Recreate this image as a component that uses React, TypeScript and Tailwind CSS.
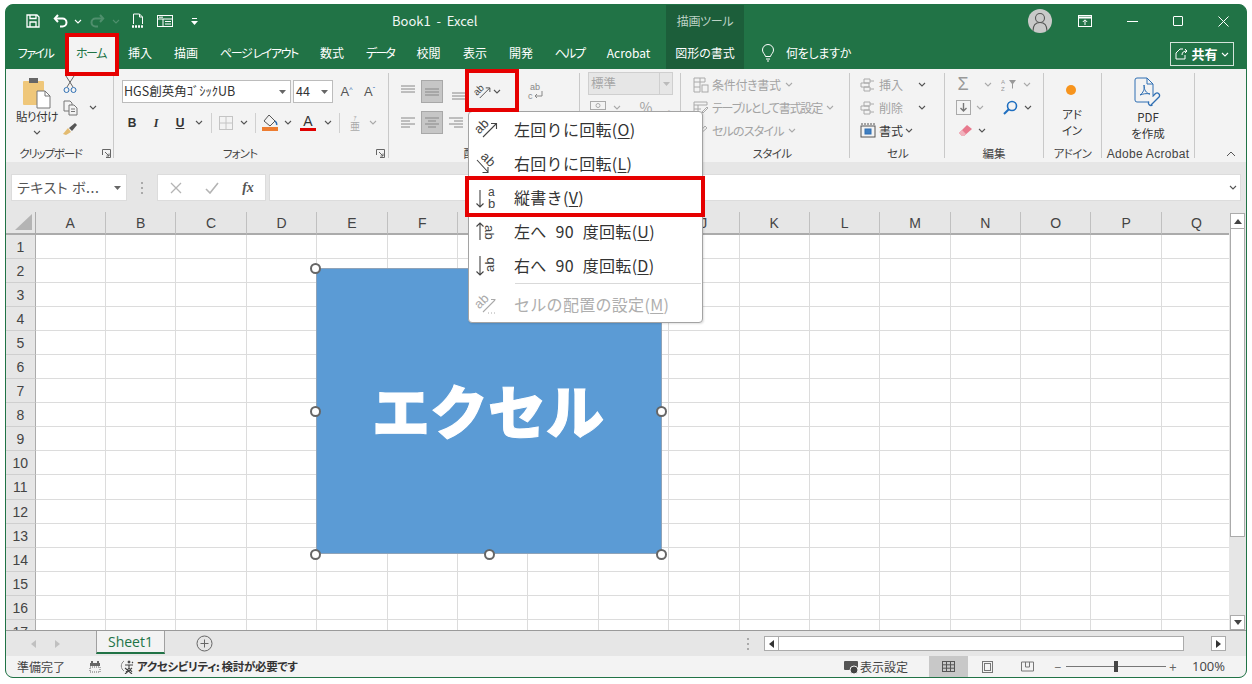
import React from "react";

const Chev = ({ c = "#555" }: { c?: string }) => (
  <svg width="8" height="5" viewBox="0 0 8 5" fill="none"><path d="M1 1l3 3 3-3" stroke={c} strokeWidth="1.1" /></svg>
);
const Tri = ({ c = "#666" }: { c?: string }) => (
  <svg width="7" height="4" viewBox="0 0 7 4"><path d="M0 0h7L3.500 4z" fill={c} /></svg>
);
const Launcher = () => (
  <svg width="9" height="9" viewBox="0 0 9 9" fill="none" stroke="#666"><path d="M.5 6V.5H8.500V8.500H4" /><path d="M3 3l4 4M7 4.500V7H4.500" /></svg>
);

const tf = "'Liberation Sans', sans-serif";
const AbLeft = ({ c = "#444" }: { c?: string }) => (
  <svg width="24" height="24" viewBox="0 0 24 24" fill="none" className="overflow-visible">
    <text x="0" y="13" fontSize="13" fill={c} fontFamily={tf} transform="rotate(-45 8 9)">ab</text>
    <path d="M9 20L22 7M17 6.500H22.500V12" stroke={c} strokeWidth="1.100" />
  </svg>
);
const AbRight = () => (
  <svg width="24" height="24" viewBox="0 0 24 24" fill="none" className="overflow-visible">
    <text x="6" y="12" fontSize="13" fill="#444" fontFamily={tf} transform="rotate(45 13 9)">ab</text>
    <path d="M3 9L14 21M14 16V21.500H8.500" stroke="#444" strokeWidth="1.100" />
  </svg>
);
const AbVert = () => (
  <svg width="24" height="24" viewBox="0 0 24 24" fill="none" className="overflow-visible">
    <path d="M6 5V22M2.500 18.500L6 22l3.500-3.500" stroke="#444" strokeWidth="1.100" />
    <text x="14" y="11" fontSize="12" fill="#444" fontFamily={tf}>a</text>
    <text x="14" y="23" fontSize="13" fill="#444" fontFamily={tf}>b</text>
  </svg>
);
const AbUp = () => (
  <svg width="24" height="24" viewBox="0 0 24 24" fill="none" className="overflow-visible">
    <path d="M6 21V4M2.500 7.500L6 4l3.500 3.500" stroke="#444" strokeWidth="1.100" />
    <text x="6" y="-11" fontSize="13" fill="#444" fontFamily={tf} transform="rotate(90)">ab</text>
  </svg>
);
const AbDown = () => (
  <svg width="24" height="24" viewBox="0 0 24 24" fill="none" className="overflow-visible">
    <path d="M6 3V22M2.500 18.500L6 22l3.500-3.500" stroke="#444" strokeWidth="1.100" />
    <text x="-19" y="20" fontSize="13" fill="#444" fontFamily={tf} transform="rotate(-90)">ab</text>
  </svg>
);
const AbFmt = () => (
  <svg width="24" height="24" viewBox="0 0 24 24" fill="none" className="overflow-visible">
    <text x="0" y="13" fontSize="13" fill="#aaa" fontFamily={tf} transform="rotate(-45 8 9)">ab</text>
    <path d="M9 20L21 8M17 7.500H21.500" stroke="#aaa" strokeWidth="1.100" />
    <path d="M14 21h9" stroke="#aaa" strokeDasharray="1 2" />
  </svg>
);

const AlignLines = ({ a }: { a: "t" | "m" | "b" | "l" | "c" | "r" }) => {
  const d: Record<string, string> = {
    t: "M3 3h14M3 6h14M3 9h14",
    m: "M3 6h14M3 9h14M3 12h14",
    b: "M3 10h14M3 13h14M3 16h14",
    l: "M3 4h14M3 7h9M3 10h14M3 13h9",
    c: "M3 4h14M6 7h8M3 10h14M6 13h8",
    r: "M3 4h14M8 7h9M3 10h14M8 13h9",
  };
  return (
    <svg width="20" height="18" viewBox="0 0 20 18" fill="none"><path d={d[a]} stroke="#888" /></svg>
  );
};

const Disabled = "text-[#a3a3a3]";
const Sep = () => <div className="w-px h-[85px] mt-[4px] bg-[#c9c9c9] shrink-0" />;
const MiniSep = () => <div className="w-px h-[20px] bg-[#d0d0d0]" />;
const GroupLabel = ({ children, className = "" }: { children: React.ReactNode; className?: string }) => (
  <span className={"text-[11.5px] leading-none text-[#444] whitespace-nowrap " + className}>{children}</span>
);

const Rib = ({ children, className = "" }: { children: React.ReactNode; className?: string }) => (
  <div className={"flex items-center justify-center shrink-0 " + className}>{children}</div>
);

function TitleBar() {
  return (
    <div className="h-[32px] flex items-stretch text-white shrink-0">
      <Rib className="ml-[15px] w-[24px]">
        <svg width="14" height="14" viewBox="0 0 14 14" fill="none" stroke="#fff" strokeWidth="1.300"><path d="M1 1h10l2 2v10H1z" /><path d="M4 1v3.500h6V1M4 13V8h6v5" /></svg>
      </Rib>
      <Rib className="ml-[2px] w-[27px]">
        <svg width="16" height="14" viewBox="0 0 16 14" fill="none" stroke="#fff" strokeWidth="2"><path d="M5 1L1.800 4.500 5 8" /><path d="M2 4.500h7.500a4 4 0 0 1 0 8H7" /></svg>
      </Rib>
      <Rib className="w-[8px]"><Chev c="#fff" /></Rib>
      <Rib className="ml-[4px] w-[22px]">
        <svg width="16" height="14" viewBox="0 0 16 14" fill="none" stroke="#4f8f6d" strokeWidth="2"><path d="M11 1l3.200 3.500L11 8" /><path d="M14 4.500H6.500a4 4 0 0 0 0 8H9" /></svg>
      </Rib>
      <Rib className="ml-[4px] w-[8px]"><Chev c="#4f8f6d" /></Rib>
      <Rib className="ml-[7px] w-[22px]">
        <svg width="14" height="16" viewBox="0 0 14 16" fill="none" stroke="#fff"><path d="M2.500 11V1h6l3 3v7M8.500 1v3h3" /><path d="M1 13.500h12" strokeWidth="2.500" strokeDasharray="2 1" /></svg>
      </Rib>
      <Rib className="ml-[5px] w-[22px]">
        <svg width="16" height="14" viewBox="0 0 16 14" fill="none" stroke="#fff"><rect x=".5" y="1.500" width="15" height="11" /><path d="M1 5h14M6 5v7M8 7.500h6M8 10h6" /><path d="M2 3.200h4" /></svg>
      </Rib>
      <Rib className="ml-[12px] w-[12px]">
        <svg width="7" height="7" viewBox="0 0 7 7" fill="#fff"><path d="M1 0h5v1H1zM0 3h7L3.500 7z" /></svg>
      </Rib>
      <div className="ml-[192px] w-[88px] shrink-0 flex items-center text-[13px] whitespace-pre text-[#f2f7f4]">Book1  -  Excel</div>
      <div className="ml-[186px] w-[78px] shrink-0 bg-[#1c5e3a] flex items-center justify-center text-[12px] text-[#bcd2c5] tracking-[-0.3px]">描画ツール</div>
      <div className="ml-[284px] w-[24px] shrink-0 flex items-center justify-center">
        <div className="w-[24px] h-[24px] rounded-full bg-[#c9c9c9] flex items-center justify-center overflow-hidden">
          <svg width="24" height="24" viewBox="0 0 24 24" fill="none" stroke="#555" strokeWidth="1.100"><circle cx="12" cy="9" r="4.500" /><path d="M5 22c0-6 3-8.500 7-8.500s7 2.500 7 8.500" /></svg>
        </div>
      </div>
      <Rib className="ml-[21px] w-[24px]">
        <svg width="14" height="12" viewBox="0 0 14 12" fill="none" stroke="#fff"><rect x=".5" y=".5" width="13" height="11" /><path d="M1 2.500h12" strokeWidth="2" /><path d="M7 10V5M4.800 7L7 4.800 9.200 7" /></svg>
      </Rib>
      <Rib className="ml-[12px] w-[46px]"><div className="w-[11px] h-px bg-white" /></Rib>
      <Rib className="w-[45px]"><div className="w-[10px] h-[10px] border border-white rounded-[1px]" /></Rib>
      <Rib className="w-[46px]">
        <svg width="11" height="11" viewBox="0 0 11 11" stroke="#fff"><path d="M.5.500l10 10M10.500.500l-10 10" /></svg>
      </Rib>
    </div>
  );
}

const tabs: [string, string][] = [
  ["ファイル", "w-[59px] tracking-[-1.5px]"],
  ["ホーム", "w-[52px] tracking-[-1.5px]"],
  ["挿入", "w-[46px]"],
  ["描画", "w-[46px]"],
  ["ページ レイアウト", "w-[100px] tracking-[-1.4px]"],
  ["数式", "w-[46px]"],
  ["データ", "w-[50px] tracking-[-1.8px]"],
  ["校閲", "w-[47px]"],
  ["表示", "w-[46px]"],
  ["開発", "w-[46px]"],
  ["ヘルプ", "w-[51px] tracking-[-1.5px]"],
  ["Acrobat", "w-[67px]"],
];

function TabRow() {
  return (
    <div className="h-[32px] flex items-stretch text-white text-[12px] shrink-0">
      {tabs.map(([t, w]) => (
        <div
          key={t}
          className={
            "flex items-center justify-center whitespace-nowrap shrink-0 " + w + (t === "ホーム" ? " bg-[#f3f3f3] text-[#217346]" : "")
          }
        >
          {t}
        </div>
      ))}
      <div className="ml-[4px] w-[78px] shrink-0 bg-[#1c5e3a] flex items-center justify-center">図形の書式</div>
      <Rib className="ml-[14px] w-[20px]">
        <svg width="14" height="18" viewBox="0 0 14 18" fill="none" stroke="#fff"><path d="M4.500 12.500C4 10 1.500 9 1.500 6a5.500 5.500 0 0 1 11 0c0 3-2.500 4-3 6.500z" /><path d="M5 15h4M6 17h2" /></svg>
      </Rib>
      <div className="ml-[8px] flex items-center tracking-[-0.3px]">何をしますか</div>
      <div className="flex-1" />
      <div className="mr-[12px] mt-[5px] mb-[3px] w-[64px] border border-[#d5e3da] flex items-center justify-center gap-[3px]">
        <svg width="13" height="12" viewBox="0 0 13 12" fill="none" stroke="#fff"><path d="M1 5v6h9V7" /><path d="M1 5l4-4h3M7 7c0-3 2-4 5-4M10 1l2 2-2 2" /></svg>
        <span className="font-bold text-[13px]">共有</span>
        <Chev c="#fff" />
      </div>
    </div>
  );
}

function ClipGroup() {
  return (
    <div className="w-[107px] h-[93px] flex flex-col shrink-0">
      <div className="h-[76px] flex">
        <div className="ml-[10px] w-[42px] flex flex-col items-center pt-[8px]">
          <svg width="30" height="32" viewBox="0 0 30 32" fill="none">
            <rect x="1" y="4" width="21" height="24" rx="1" fill="#efc77a" />
            <rect x="7" y="1" width="9" height="5" fill="#666" />
            <path d="M15 14h8l5 5v12H15z" fill="#fff" stroke="#777" />
            <path d="M23 14v5h5" stroke="#777" />
          </svg>
          <span className="text-[11.5px] leading-none mt-[2px] text-[#333] whitespace-nowrap tracking-[-0.4px]">貼り付け</span>
          <div className="mt-[7px]"><Chev /></div>
        </div>
        <div className="w-[24px] pt-[4px] flex flex-col items-center">
          <Rib className="h-[23px]">
            <svg width="14" height="18" viewBox="0 0 14 18" fill="none"><path d="M3 0l7 11M11 0L4 11" stroke="#666" /><circle cx="3.500" cy="14" r="2.500" stroke="#2f6fb3" /><circle cx="10.500" cy="14" r="2.500" stroke="#2f6fb3" /></svg>
          </Rib>
          <Rib className="h-[23px]">
            <svg width="15" height="16" viewBox="0 0 15 16" fill="none" stroke="#777"><path d="M1 1h6l2 2v8H1z" /><path d="M6 5h5l3 3v7H6z" fill="#f3f3f3" /><path d="M8 9h4M8 11.500h4" /></svg>
          </Rib>
          <Rib className="h-[19px]">
            <svg width="16" height="14" viewBox="0 0 16 14"><path d="M1 12l3 1 5-3-3-4z" fill="#e3bb70" /><path d="M7 6l3 3 5-6-2-2z" fill="#555" /></svg>
          </Rib>
        </div>
        <div className="w-[22px] pt-[27px]"><Rib className="h-[23px]"><Chev /></Rib></div>
      </div>
      <div className="h-[17px] flex items-center">
        <div className="ml-[15px] w-[59px] flex justify-center"><GroupLabel className="tracking-[-1.2px]">クリップボード</GroupLabel></div>
        <div className="ml-[22px]"><Launcher /></div>
      </div>
    </div>
  );
}

function FontGroup() {
  return (
    <div className="w-[274px] h-[93px] flex flex-col shrink-0">
      <div className="h-[76px] flex flex-col">
        <div className="mt-[11px] ml-[8px] h-[23px] flex">
          <div className="w-[169px] bg-white border border-[#bcbcbc] flex items-center justify-between pl-[1px] pr-[4px] text-[12.5px] text-[#333] whitespace-nowrap">
            HGS創英角ｺﾞｼｯｸUB <Tri />
          </div>
          <div className="ml-[2px] w-[40px] bg-white border border-[#bcbcbc] flex items-center justify-between pl-[2px] pr-[4px] text-[12.5px] text-[#333]">
            44 <Tri />
          </div>
          <Rib className="ml-[2px] w-[23px]"><span className="text-[13px] text-[#555] font-['Liberation_Sans']">A<sup className="text-[7px] text-[#2b6cb0]">^</sup></span></Rib>
          <Rib className="w-[23px]"><span className="text-[13px] text-[#555] font-['Liberation_Sans']">A<sup className="text-[7px] text-[#2b6cb0]">ˇ</sup></span></Rib>
        </div>
        <div className="mt-[8px] ml-[6px] h-[23px] flex items-center text-[#333]">
          <Rib className="w-[24px] font-bold text-[12px] font-['Liberation_Sans']">B</Rib>
          <Rib className="w-[24px] italic font-bold text-[12px] font-['Liberation_Serif']">I</Rib>
          <Rib className="w-[24px] font-bold underline text-[12px] font-['Liberation_Sans']">U</Rib>
          <Rib className="w-[14px]"><Chev /></Rib>
          <Rib className="w-[10px]"><MiniSep /></Rib>
          <Rib className="w-[20px]">
            <svg width="14" height="14" viewBox="0 0 14 14" fill="none" stroke="#c4c4c4"><rect x=".5" y=".5" width="13" height="13" /><path d="M7 0v14M0 7h14" /></svg>
          </Rib>
          <Rib className="w-[16px]"><Chev /></Rib>
          <Rib className="w-[6px]"><MiniSep /></Rib>
          <Rib className="w-[24px]">
            <svg width="16" height="17" viewBox="0 0 16 17" fill="none"><path d="M7 1l6 6-5 5-6-5z" stroke="#555" /><path d="M13 7c1 1 2 3 1.500 4" stroke="#2f6fb3" strokeWidth="1.500" /><rect y="13" width="16" height="4" fill="#ed7d31" /></svg>
          </Rib>
          <Rib className="w-[12px]"><Chev /></Rib>
          <Rib className="w-[28px]">
            <div className="flex flex-col items-center w-[16px]">
              <span className="text-[14px] leading-[14px] font-['Liberation_Sans'] text-[#333]">A</span>
              <div className="w-[16px] h-[3px] bg-[#e00000]" />
            </div>
          </Rib>
          <Rib className="w-[12px]"><Chev /></Rib>
          <Rib className="w-[10px]"><MiniSep /></Rib>
          <Rib className="w-[22px]">
            <div className="flex flex-col items-center text-[#aaa] leading-none">
              <span className="text-[6px] leading-[7px]">ｱ</span>
              <span className="text-[10px] leading-[10px]">亜</span>
            </div>
          </Rib>
          <Rib className="w-[14px]"><Chev c="#aaa" /></Rib>
        </div>
      </div>
      <div className="h-[17px] flex items-center">
        <div className="ml-[108px] w-[36px] flex justify-center"><GroupLabel className="tracking-[-0.8px]">フォント</GroupLabel></div>
        <div className="ml-[118px]"><Launcher /></div>
      </div>
    </div>
  );
}

function AlignGroup() {
  return (
    <div className="w-[190px] h-[93px] flex flex-col shrink-0">
      <div className="h-[76px] flex flex-col">
        <div className="mt-[11px] ml-[8px] h-[23px] flex items-center">
          <Rib className="w-[22px]"><AlignLines a="t" /></Rib>
          <Rib className="ml-[2px] w-[22px] h-[23px] bg-[#c6c6c6] border border-[#a8a8a8]"><AlignLines a="m" /></Rib>
          <Rib className="ml-[2px] w-[28px]"><AlignLines a="b" /></Rib>
          <Rib className="w-[17px]">
            <svg width="18" height="18" viewBox="0 0 24 24" fill="none" className="shrink-0 overflow-visible">
              <text x="0" y="13" fontSize="13" fill="#444" fontFamily={tf} transform="rotate(-45 8 9)">ab</text>
              <path d="M9 20L22 7M17 6.500H22.500V12" stroke="#444" strokeWidth="1.200" />
            </svg>
          </Rib>
          <Rib className="w-[14px]"><Chev /></Rib>
          <Rib className="ml-[21px] w-[22px]">
            <svg width="18" height="20" viewBox="0 0 18 20"><text x="3" y="8" fontSize="9" fill="#888" fontFamily={tf}>ab</text><text x="1" y="17" fontSize="9" fill="#888" fontFamily={tf}>c</text><path d="M15 9v5H8M10 12l-2 2 2 2" stroke="#888" fill="none" /></svg>
          </Rib>
        </div>
        <div className="mt-[8px] ml-[8px] h-[23px] flex items-center">
          <Rib className="w-[22px]"><AlignLines a="l" /></Rib>
          <Rib className="ml-[2px] w-[22px] h-[23px] bg-[#c6c6c6] border border-[#a8a8a8]"><AlignLines a="c" /></Rib>
          <Rib className="ml-[2px] w-[22px]"><AlignLines a="r" /></Rib>
        </div>
      </div>
      <div className="h-[17px] flex items-center justify-center pr-[18px]"><GroupLabel>配置</GroupLabel></div>
    </div>
  );
}

function NumberGroup() {
  return (
    <div className="w-[100px] h-[93px] flex flex-col shrink-0">
      <div className="h-[76px] flex flex-col pl-[8px] pt-[3px]">
        <div className="w-[85px] h-[23px] bg-[#e6e6e6] border border-[#cfcfcf] flex items-center text-[12.5px] text-[#a6a6a6]">
          <span className="pl-[2px] flex-1">標準</span>
          <div className="w-[13px] h-full border-l border-[#cfcfcf] flex items-center justify-center"><Tri c="#bbb" /></div>
        </div>
        <div className="h-[22px] mt-[1px] flex items-center">
          <Rib className="w-[20px]">
            <svg width="16" height="13" viewBox="0 0 16 13" fill="none" stroke="#aaa"><rect x=".5" y=".5" width="15" height="8" /><circle cx="8" cy="4.500" r="2" /><path d="M3 11h10" /></svg>
          </Rib>
          <Rib className="w-[18px]"><Chev c="#aaa" /></Rib>
          <Rib className={"ml-[10px] w-[20px] text-[14px] " + Disabled}>%</Rib>
          <Rib className={"ml-[3px] w-[20px] text-[14px] font-bold " + Disabled}>,</Rib>
        </div>
      </div>
      <div className="h-[17px]" />
    </div>
  );
}

const StyleRow = ({ t, icon, tr = "" }: { t: string; icon: React.ReactNode; tr?: string }) => (
  <div className={"h-[23px] flex items-center text-[12px] whitespace-nowrap " + Disabled}>
    <div className="w-[20px] flex justify-center shrink-0">{icon}</div>
    <span className={"ml-[1px] " + tr}>{t}</span>
    <div className="ml-[4px]"><Chev c="#aaa" /></div>
  </div>
);

function StyleGroup() {
  return (
    <div className="w-[168px] h-[93px] flex flex-col shrink-0">
      <div className="h-[76px] pt-[4px] pl-[10px]">
        <StyleRow t="条件付き書式" tr="tracking-[-0.3px]" icon={<svg width="16" height="16" viewBox="0 0 16 16" fill="none" stroke="#aaa"><path d="M1 1h6v14H1zM1 5h6M1 10h6M7 5h5M12 1H7M12 1v4" /><rect x="9" y="8" width="6" height="7" /></svg>} />
        <StyleRow t="テーブルとして書式設定" tr="tracking-[-1.2px]" icon={<svg width="16" height="14" viewBox="0 0 16 14" fill="none" stroke="#aaa"><path d="M1 1h13v3H1zM1 4v9h7M5 4v9M1 8h7" /><path d="M9 11l5-5 1 1-5 5z" /></svg>} />
        <StyleRow t="セルのスタイル" tr="tracking-[-0.8px]" icon={<svg width="14" height="14" viewBox="0 0 14 14" fill="none" stroke="#aaa"><path d="M2 12l3-3 6-7 2 2-7 6z" /></svg>} />
      </div>
      <div className="h-[17px] flex items-center justify-center pl-[14px]"><GroupLabel className="tracking-[-0.6px]">スタイル</GroupLabel></div>
    </div>
  );
}

const CellRow = ({ t, icon, off, gap }: { t: string; icon: React.ReactNode; off?: boolean; gap: string }) => (
  <div className={"h-[23px] flex items-center text-[12px] whitespace-nowrap " + (off ? Disabled : "text-[#333]")}>
    <div className="w-[20px] flex justify-center shrink-0">{icon}</div>
    <span className="ml-[1px]">{t}</span>
    <div className={gap}><Chev c="#555" /></div>
  </div>
);

function CellsGroup() {
  const g = (
    <svg width="16" height="14" viewBox="0 0 16 14" fill="none" stroke="#aaa"><path d="M4 1h6v4H4zM1 5h8v4H1zM4 9h6v4H4zM10 3h4M10 11h4" /></svg>
  );
  return (
    <div className="w-[94px] h-[93px] flex flex-col shrink-0">
      <div className="h-[76px] pt-[4px] pl-[8px]">
        <CellRow t="挿入" off icon={g} gap="ml-[15px]" />
        <CellRow t="削除" off icon={g} gap="ml-[15px]" />
        <CellRow t="書式" gap="ml-[2px]" icon={<svg width="16" height="15" viewBox="0 0 16 15" fill="none" stroke="#555"><rect x="1" y="3" width="14" height="11" /><path d="M1 1h14" strokeDasharray="2 1" /><rect x="5" y="6" width="6" height="5" fill="#3f7fc1" stroke="#2f6fb3" /></svg>} />
      </div>
      <div className="h-[17px] flex items-center justify-center pl-[2px]"><GroupLabel>セル</GroupLabel></div>
    </div>
  );
}

function EditGroup() {
  return (
    <div className="w-[98px] h-[93px] flex flex-col shrink-0">
      <div className="h-[76px] pt-[4px] pl-[8px]">
        <div className="h-[23px] flex items-center">
          <Rib className="w-[20px] text-[18px] text-[#999] font-['Liberation_Sans']">Σ</Rib>
          <Rib className="ml-[6px] w-[18px]"><Chev c="#aaa" /></Rib>
          <Rib className="ml-[2px] w-[20px]">
            <svg width="16" height="14" viewBox="0 0 16 14"><text x="0" y="6" fontSize="6" fill="#999" fontFamily={tf}>A</text><text x="0" y="13" fontSize="6" fill="#999" fontFamily={tf}>Z</text><path d="M8 2h7l-3 4v5l-1-1V6z" fill="#999" /></svg>
          </Rib>
          <Rib className="w-[16px]"><Chev c="#aaa" /></Rib>
        </div>
        <div className="h-[23px] flex items-center">
          <Rib className="w-[20px]">
            <svg width="15" height="15" viewBox="0 0 15 15" fill="none"><rect x=".5" y=".5" width="14" height="14" stroke="#aaa" /><path d="M7.500 3v8M4.500 8l3 3 3-3" stroke="#777" strokeWidth="1.400" /></svg>
          </Rib>
          <Rib className="w-[14px]"><Chev c="#aaa" /></Rib>
          <Rib className="ml-[12px] w-[22px]">
            <svg width="15" height="15" viewBox="0 0 15 15" fill="none" stroke="#1f6fc0" strokeWidth="1.600"><circle cx="9" cy="6" r="4.500" /><path d="M5.800 9.200L1 14" strokeWidth="2" /></svg>
          </Rib>
          <Rib className="w-[14px]"><Chev /></Rib>
        </div>
        <div className="h-[23px] flex items-center">
          <Rib className="w-[24px]">
            <svg width="15" height="13" viewBox="0 0 15 13"><path d="M1 9l8-8 5 4-8 7H4z" fill="#e8798d" /><path d="M1 9l3 3h2l2-2-4-4z" fill="#f1b1bc" /></svg>
          </Rib>
          <Rib className="w-[10px]"><Chev /></Rib>
        </div>
      </div>
      <div className="h-[17px] flex items-center justify-center"><GroupLabel>編集</GroupLabel></div>
    </div>
  );
}

function AddinGroup() {
  return (
    <div className="w-[57px] h-[93px] flex flex-col shrink-0">
      <div className="h-[76px] flex flex-col items-center text-[11.500px] leading-[16px] text-[#333]">
        <div className="mt-[16px] -ml-[3px] w-[10px] h-[10px] rounded-full bg-[#f7941d]" />
        <span className="mt-[11px] -ml-[1px]">アド</span>
        <span className="-ml-[1px]">イン</span>
      </div>
      <div className="h-[17px] flex items-center justify-center"><GroupLabel className="tracking-[-0.6px]">アドイン</GroupLabel></div>
    </div>
  );
}

function AcrobatGroup() {
  return (
    <div className="w-[92px] h-[93px] flex flex-col shrink-0">
      <div className="h-[76px] flex flex-col items-center text-[11.500px] leading-[16px] text-[#333]">
        <svg className="mt-[8px]" width="28" height="30" viewBox="0 0 28 30" fill="none" stroke="#2f6fb3">
          <path d="M19 18V7l-6-6H3a2 2 0 0 0-2 2v20a2 2 0 0 0 2 2h11" />
          <path d="M13 1v6h6" />
          <path d="M6 18c3-2 5-6 4-10 0 5 2 8 6 9-4-1-7 0-10 1z" />
          <path d="M17 28l8-8a2.500 2.500 0 0 0-3.500-3.500l-3 3M15 24.500a2.500 2.500 0 0 0 3.500 3.500" strokeWidth="1.300" />
        </svg>
        <span className="mt-[2px]">PDF</span>
        <span>を作成</span>
      </div>
      <div className="h-[17px] flex items-center justify-center"><span className="text-[12px] leading-none tracking-[0.3px] text-[#444] whitespace-nowrap font-['Liberation_Sans']">Adobe Acrobat</span></div>
    </div>
  );
}

function Ribbon() {
  return (
    <div className="h-[93px] bg-[#f3f3f3] flex shrink-0">
      <ClipGroup /><Sep />
      <FontGroup /><Sep />
      <AlignGroup /><Sep />
      <NumberGroup /><Sep />
      <StyleGroup /><Sep />
      <CellsGroup /><Sep />
      <EditGroup /><Sep />
      <AddinGroup /><Sep />
      <AcrobatGroup /><Sep />
      <div className="flex-1 flex items-end justify-end pr-[10px] pb-[5px]">
        <svg width="10" height="6" viewBox="0 0 10 6" fill="none" stroke="#555"><path d="M1 5l4-4 4 4" /></svg>
      </div>
    </div>
  );
}

function FormulaBar() {
  return (
    <div className="h-[50px] bg-[#e6e6e6] flex pt-[12px] pl-[5px] pr-[5px] shrink-0">
      <div className="w-[116px] h-[27px] bg-white border border-[#dcdcdc] flex items-center justify-between pl-[5px] pr-[5px] text-[14px] text-[#555] whitespace-nowrap">
        <span className="tracking-[0.6px]">テキスト ボ...</span>
        <Tri />
      </div>
      <div className="w-[30px] h-[27px] flex items-center justify-center">
        <svg width="3" height="12" viewBox="0 0 3 12" fill="#aaa"><rect width="2" height="2" /><rect y="5" width="2" height="2" /><rect y="10" width="2" height="2" /></svg>
      </div>
      <div className="w-[109px] h-[27px] bg-white border border-[#dcdcdc] flex items-center">
        <Rib className="w-[36px]"><svg width="12" height="12" viewBox="0 0 12 12" stroke="#b4b4b4" strokeWidth="1.300"><path d="M1 1l10 10M11 1L1 11" /></svg></Rib>
        <Rib className="w-[36px]"><svg width="14" height="12" viewBox="0 0 14 12" fill="none" stroke="#b4b4b4" strokeWidth="1.600"><path d="M1 7l4 4 8-10" /></svg></Rib>
        <Rib className="w-[36px] italic font-bold text-[14px] text-[#555] font-['Liberation_Serif']">fx</Rib>
      </div>
      <div className="ml-[3px] flex-1 h-[27px] bg-white border border-[#dcdcdc] flex items-center justify-end pr-[3px]">
        <Chev />
      </div>
    </div>
  );
}

const cols = "ABCDEFGHIJKLMNOPQ".split("");
const rows = Array.from({ length: 17 }, (_, i) => i + 1);

function Sheet() {
  return (
    <div className="h-[418px] flex shrink-0 bg-[#e6e6e6]">
      <div className="w-[1223px] overflow-hidden">
        <div className="grid grid-cols-[29.6px_repeat(17,70.4px)] w-[1227px] grid-rows-[23px_repeat(17,24.05px)]">
          <div className="bg-[#e6e6e6] border-b-2 border-r border-[#ababab] flex items-end justify-end pr-[3px] pb-[3px]">
            <svg width="17" height="16" viewBox="0 0 17 16"><path d="M17 0v16H0z" fill="#b4b4b4" /></svg>
          </div>
          {cols.map((c) => (
            <div key={c} className="bg-[#e6e6e6] border-b-2 border-[#ababab] border-r border-r-[#c0c0c0] flex items-center justify-center pt-[1px] text-[14px] text-[#444] font-['Liberation_Sans']">
              {c}
            </div>
          ))}
          {rows.map((r) => (
            <React.Fragment key={r}>
              <div className="bg-[#e6e6e6] border-r border-r-[#ababab] border-b border-b-[#cfcfcf] flex items-center justify-center pt-[2px] text-[14px] text-[#444] font-['Liberation_Sans']">
                {r}
              </div>
              {cols.map((c) => (
                <div key={c} className="bg-white border-r border-b border-[#dcdcdc]" />
              ))}
            </React.Fragment>
          ))}
        </div>
      </div>
      <div className="flex-1 flex flex-col pt-[1px] pl-px">
        <div className="w-[15px] h-[16px] bg-white border border-[#ababab] flex items-center justify-center"><svg width="8" height="5" viewBox="0 0 8 5"><path d="M4 0l4 5H0z" fill="#444" /></svg></div>
        <div className="w-[15px] h-[308px] bg-white border border-t-0 border-[#ababab]" />
        <div className="flex-1" />
        <div className="w-[15px] h-[15px] bg-white border border-[#ababab] flex items-center justify-center"><svg width="8" height="5" viewBox="0 0 8 5"><path d="M4 5l4-5H0z" fill="#444" /></svg></div>
      </div>
    </div>
  );
}

function SheetTabs() {
  return (
    <div className="h-[26px] bg-[#e6e6e6] border-t border-[#9a9a9a] flex shrink-0">
      <Rib className="ml-[22px] w-[10px]"><svg width="5" height="8" viewBox="0 0 5 8"><path d="M5 0v8L0 4z" fill="#c0c0c0" /></svg></Rib>
      <Rib className="ml-[14px] w-[10px]"><svg width="5" height="8" viewBox="0 0 5 8"><path d="M0 0v8l5-4z" fill="#c0c0c0" /></svg></Rib>
      <div className="ml-[34px] w-[69px] h-[23px] bg-[#f3f3f3] border-x border-[#a0a0a0] border-b-2 border-b-[#217346] flex items-center justify-center text-[14px] text-[#217346] font-['Open_Sans']">Sheet1</div>
      <Rib className="ml-[30px] w-[18px]">
        <svg width="17" height="17" viewBox="0 0 17 17" fill="none" stroke="#666"><circle cx="8.500" cy="8.500" r="7.500" /><path d="M8.500 4.500v8M4.500 8.500h8" /></svg>
      </Rib>
      <div className="flex-1" />
      <Rib className="w-[4px]"><svg width="3" height="12" viewBox="0 0 3 12" fill="#aaa"><rect width="2" height="2" /><rect y="5" width="2" height="2" /><rect y="10" width="2" height="2" /></svg></Rib>
      <div className="ml-[14px] mt-[5px] h-[15px] flex">
        <div className="w-[15px] bg-white border border-[#ababab] flex items-center justify-center"><svg width="5" height="8" viewBox="0 0 5 8"><path d="M5 0v8L0 4z" fill="#333" /></svg></div>
        <div className="w-[405px] bg-white border border-l-0 border-[#ababab]" />
        <div className="w-[27px]" />
        <div className="w-[15px] bg-white border border-[#ababab] flex items-center justify-center"><svg width="5" height="8" viewBox="0 0 5 8"><path d="M0 0v8l5-4z" fill="#333" /></svg></div>
      </div>
      <div className="w-[20px]" />
    </div>
  );
}

function StatusBar() {
  return (
    <div className="h-[21px] bg-[#f3f3f3] flex items-stretch text-[12px] text-[#444] shrink-0 whitespace-nowrap">
      <div className="ml-[11px] w-[48px] flex items-center">準備完了</div>
      <Rib className="ml-[23px] w-[14px]">
        <svg width="12" height="12" viewBox="0 0 12 12" fill="#666"><rect x="1" y="2" width="10" height="3" /><rect x="2" y="0" width="2" height="2" /><rect x="8" y="0" width="2" height="2" /><path d="M1 6h10v5H1z" fill="none" stroke="#666" strokeDasharray="1 1" /></svg>
      </Rib>
      <Rib className="ml-[17px] w-[18px]">
        <svg width="16" height="15" viewBox="0 0 16 15" fill="none" stroke="#444"><path d="M4 2a6 6 0 0 0 0 10" stroke="#888" /><circle cx="9" cy="3" r="1" fill="#444" /><path d="M5 6h8M9 6v3M6 13l3-4 3 4M13 3l-1 1M5 9l7 6M12 9l-7 6" strokeWidth="1.100" /></svg>
      </Rib>
      <div className="flex items-center font-bold text-[11.500px] tracking-[-0.35px] text-[#333]">アクセシビリティ: 検討が必要です</div>
      <div className="flex-1" />
      <Rib className="w-[16px]">
        <svg width="15" height="14" viewBox="0 0 15 14"><rect y="1" width="14" height="9" rx="1" fill="#555" /><circle cx="10" cy="10" r="4" fill="#444" stroke="#f3f3f3" /></svg>
      </Rib>
      <div className="w-[48px] flex items-center">表示設定</div>
      <div className="w-[21px]" />
      <Rib className="w-[39px] bg-[#c8c8c8]">
        <svg width="13" height="11" viewBox="0 0 13 11" fill="none" stroke="#555"><rect x=".5" y=".5" width="12" height="10" /><path d="M4.500 0v11M8.500 0v11M0 3.800h13M0 7.200h13" /></svg>
      </Rib>
      <Rib className="w-[40px]">
        <svg width="11" height="12" viewBox="0 0 11 12" fill="none" stroke="#777"><rect x=".5" y=".5" width="10" height="11" /><rect x="2.500" y="2.500" width="6" height="7" /></svg>
      </Rib>
      <Rib className="w-[39px]">
        <svg width="13" height="11" viewBox="0 0 13 11" fill="none" stroke="#777"><path d="M.5 1v9h12V1zM4.500 1v5h4V1" /></svg>
      </Rib>
      <Rib className="ml-[6px] w-[10px] text-[#666]">−</Rib>
      <div className="ml-[3px] w-[100px] flex items-center relative">
        <div className="w-full h-px bg-[#777]" />
        <div className="absolute left-[48px] w-[4px] h-[11px] bg-[#444]" />
      </div>
      <Rib className="ml-[2px] w-[10px] text-[#666] text-[13px]">+</Rib>
      <div className="ml-[14px] flex items-center text-[13px] text-[#444] font-['Open_Sans']">100%</div>
      <div className="w-[21px]" />
    </div>
  );
}

const Item = ({ icon, label, k, off, className = "" }: { icon: React.ReactNode; label: string; k: string; off?: boolean; className?: string }) => (
  <div className={"h-[34px] flex items-center whitespace-nowrap text-[16px] tracking-[0.3px] [word-spacing:5px] [font-feature-settings:normal] " + (off ? "text-[#aeaeae] " : "text-[#333] ") + className}>
    <div className="w-[45px] flex justify-start pl-[5px] shrink-0">{icon}</div>
    <span>
      {label}(<span className="underline underline-offset-2">{k}</span>)
    </span>
  </div>
);

function Menu() {
  return (
    <div className="absolute left-[468px] top-[111px] w-[235px] h-[212px] bg-white border border-[#a3a3a3] rounded-[4px] shadow-[1px_1px_2px_rgba(0,0,0,0.12)]">
      <Item icon={<AbLeft />} label="左回りに回転" k="O" />
      <Item icon={<AbRight />} label="右回りに回転" k="L" />
      <Item icon={<AbVert />} label="縦書き" k="V" />
      <Item icon={<AbUp />} label="左へ 90 度回転" k="U" />
      <Item icon={<AbDown />} label="右へ 90 度回転" k="D" />
      <div className="ml-[46px] mr-[1px] mt-[1px] h-px bg-[#d9d9d9]" />
      <Item icon={<AbFmt />} label="セルの配置の設定" k="M" off className="mt-[3px]" />
    </div>
  );
}

const Handle = ({ className }: { className: string }) => (
  <div className={"absolute w-[11px] h-[11px] rounded-full bg-white border-2 border-[#666] " + className} />
);

function Shape() {
  return (
    <div className="absolute left-[316px] top-[268px] w-[346px] h-[286px] bg-[#5b9bd5] border border-[#8fa3b8] flex items-center justify-center">
      <span className="text-[58px] font-black leading-none text-white whitespace-nowrap font-['Noto_Sans_CJK_JP'] [font-feature-settings:normal] [-webkit-text-stroke:1px_white] -mt-[5px] -ml-[2px]">エクセル</span>
      <Handle className="-left-[7px] -top-[6px]" />
      <Handle className="-right-[6px] -top-[6px]" />
      <Handle className="-left-[7px] top-[137px]" />
      <Handle className="-right-[6px] top-[137px]" />
      <Handle className="-left-[7px] -bottom-[7px]" />
      <Handle className="left-[167px] -bottom-[7px]" />
      <Handle className="-right-[6px] -bottom-[7px]" />
    </div>
  );
}

export default function App() {
  return (
    <div className="relative w-[1252px] h-[684px] bg-white pt-[4px] pl-[5px] overflow-hidden font-['Noto_Sans_CJK_JP','Noto_Sans',sans-serif] [font-feature-settings:'palt']">
      <div className="w-[1242px] h-[674px] rounded-[8px] border border-[#217346] bg-[#217346] overflow-hidden flex flex-col">
        <TitleBar />
        <TabRow />
        <Ribbon />
        <FormulaBar />
        <Sheet />
        <SheetTabs />
        <StatusBar />
      </div>
      <Shape />
      <Menu />
      <div className="absolute left-[65px] top-[33px] w-[54px] h-[43px] border-[4px] border-[#e60000]" />
      <div className="absolute left-[465px] top-[69px] w-[54px] h-[43px] border-[4px] border-[#e60000]" />
      <div className="absolute left-[465px] top-[176px] w-[240px] h-[41px] border-[4px] border-[#e60000]" />
    </div>
  );
}
